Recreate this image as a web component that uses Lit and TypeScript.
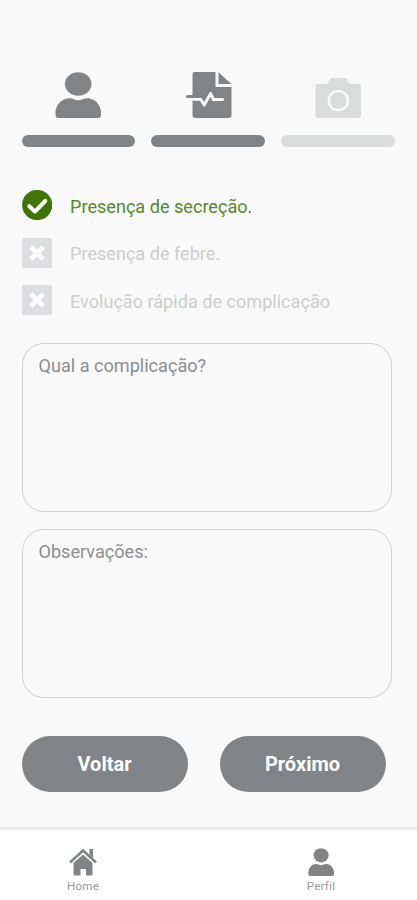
import { LitElement, html, css, svg } from "lit";
import { customElement, property } from "lit/decorators.js";

const person = svg`
  <ellipse cx="23.2" cy="12" rx="13.3" ry="11.7"/>
  <path d="M13 26.3Q17 26 19 27.2Q23 29.4 27.5 27.2Q30 26 34 26.3Q44 28 46 39V43Q46 46 43 46H3.5Q.5 46 .5 43V39Q2.500 28 13 26.300Z"/>`;

@customElement("step-item")
class StepItem extends LitElement {
  @property() kind = "person";
  static styles = css`
    :host { display: flex; flex-direction: column; align-items: center; color: #808486; }
    :host([pending]) { color: #dadcdc; }
    svg { display: block; fill: currentColor; overflow: visible; }
    .bar { width: 100%; height: 12px; border-radius: 6px; background: currentColor; margin-top: 17px; }
  `;
  icon() {
    if (this.kind === "record")
      return svg`
        <path d="M9 0H30.500V15H46.500V43Q46.500 46 43.500 46H10.500Q7.500 46 7.500 43V2Q7.500 0 9 0Z"/>
        <path d="M33.500 .3L46.300 12H33.500Z"/>
        <path d="M8.500 27.200H15.700L19.200 33L25.600 21.500L28.400 27.600H37.600" fill="none" stroke="#f9f9f9" stroke-width="3" stroke-linejoin="round" stroke-linecap="round"/>
        <path d="M2.500 24.500H13.500" fill="none" stroke="currentColor" stroke-width="3.200" stroke-linecap="round"/>`;
    if (this.kind === "camera")
      return svg`
        <path d="M3 12H10.500Q13 12 14 9L15 7Q15.600 6 17 6H29.500Q31 6 31.600 7L33 10Q34 12 36 12H43Q46 12 46 15V43Q46 46 43 46H3.500Q.5 46 .5 43V15Q.5 12 3 12Z"/>
        <circle cx="23.300" cy="28.700" r="9.600" fill="none" stroke="#f9f9f9" stroke-width="2.400"/>`;
    return person;
  }
  render() {
    return html`<svg width="46" height="46" viewBox="0 0 46 46">${this.icon()}</svg><div class="bar"></div>`;
  }
}

@customElement("check-row")
class CheckRow extends LitElement {
  @property({ type: Boolean }) checked = false;
  static styles = css`
    :host { display: flex; align-items: center; gap: 18px; height: 30px; color: #cdcece; font-size: 18.1px; white-space: nowrap; }
    :host([checked]) { color: #57892a; }
    svg { display: block; flex: none; }
    .label { padding-top: 2px; }
  `;
  render() {
    return html`
      <svg width="30.500" height="30" viewBox="0 0 30.500 30">
        ${this.checked
          ? svg`<circle cx="15.200" cy="15" r="15.100" fill="#3f7504"/><path d="M7.300 16.200L13 21.600L23.300 10.800" fill="none" stroke="#fff" stroke-width="4" stroke-linejoin="round" stroke-linecap="round"/>`
          : svg`<rect width="30.300" height="30" rx="2.500" fill="#dcdfdf"/><path d="M9 9L21.200 21M21.200 9L9 21" stroke="#fafafa" stroke-width="5"/>`}
      </svg>
      <span class="label"><slot></slot></span>`;
  }
}

@customElement("app-root")
class AppRoot extends LitElement {
  static styles = css`
    :host { display: flex; flex-direction: column; box-sizing: border-box; height: 900px; background: #f9f9f9; font-family: Roboto, sans-serif; overflow: hidden; }
    .main { flex: 1; padding: 72px 21.5px 0; }
    .steps { display: grid; grid-template-columns: repeat(3, 113.7px); gap: 16px; }
    .checks { display: flex; flex-direction: column; gap: 17.5px; margin-top: 43px; }
    .field { box-sizing: border-box; width: 370.700px; height: 169px; border: 1.4px solid #cfd1d1; border-radius: 22px; padding: 11px 16px; color: #8c8f8f; font-size: 18.1px; line-height: 22px; }
    .fields { display: grid; gap: 16.500px; margin-top: 28px; }
    .actions { display: flex; gap: 32px; margin-top: 38px; }
    .button { border: 0; padding: 0; width: 166px; height: 56px; border-radius: 28px; background: #808486; color: #fff; font: 700 20px Roboto, sans-serif; }
    .nav { display: flex; justify-content: space-between; box-sizing: border-box; height: 73px; border-top: 3px solid #ebebeb; background: #fff; padding: 18px 66px 0 53px; }
    .tab { display: flex; flex-direction: column; align-items: center; width: 60px; color: #999b9c; font-size: 11.5px; line-height: 14px; letter-spacing: .3px; gap: 3px; }
    .tab svg { fill: #808486; display: block; }
  `;
  render() {
    return html`
      <div class="main">
        <div class="steps">
          <step-item kind="person"></step-item>
          <step-item kind="record"></step-item>
          <step-item kind="camera" pending></step-item>
        </div>
        <div class="checks">
          <check-row checked>Presença de secreção.</check-row>
          <check-row>Presença de febre.</check-row>
          <check-row>Evolução rápida de complicação</check-row>
        </div>
        <div class="fields">
          <div class="field">Qual a complicação?</div>
          <div class="field">Observações:</div>
        </div>
        <div class="actions">
          <button class="button">Voltar</button>
          <button class="button">Próximo</button>
        </div>
      </div>
      <div class="nav">
        <div class="tab">
          <svg width="28" height="28" viewBox="0 0 28 28">
            <path d="M1 14.500L14 2.500L27 14.500" fill="none" stroke="#808486" stroke-width="2.600"/>
            <path d="M20.500 1H24V10L20.500 7Z"/>
            <path d="M14 6.600L23.500 15V26Q23.500 27.500 22 27.500H17V21H11.500V27.500H6Q4.500 27.500 4.500 26V15Z"/>
          </svg>
          Home
        </div>
        <div class="tab">
          <svg width="26" height="28" viewBox="0 0 46 46" preserveAspectRatio="none">${person}</svg>
          Perfil
        </div>
      </div>`;
  }
}
